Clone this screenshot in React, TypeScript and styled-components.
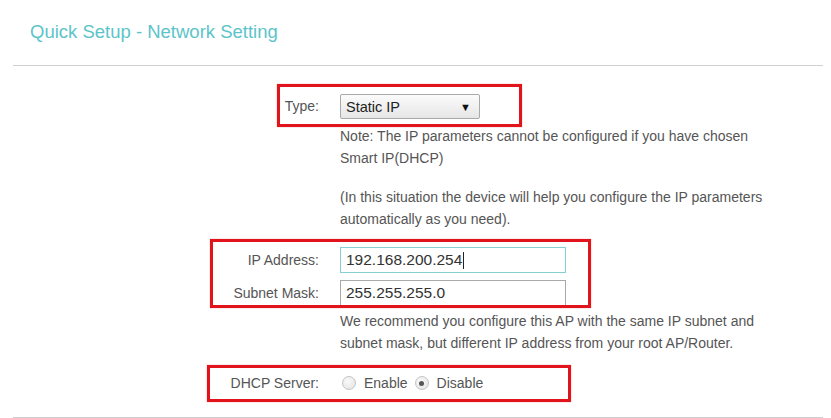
import React from 'react'
import styled, { createGlobalStyle } from 'styled-components'

const GlobalStyle = createGlobalStyle`
  html, body {
    margin: 0;
    padding: 0;
    background: #ffffff;
  }
  body {
    font-family: 'Liberation Sans', Arial, sans-serif;
    color: #555555;
  }
`

const Page = styled.div`
  position: relative;
  width: 831px;
  height: 418px;
  overflow: hidden;
  background: #fff;
`

const Title = styled.h1`
  margin: 0;
  padding: 21px 0 0 30px;
  height: 65px;
  box-sizing: border-box;
  font-size: 18.5px;
  font-weight: 400;
  color: #5cc4c9;
  line-height: 22px;
`

const Rule = styled.div`
  height: 1px;
  margin: 0 8px 0 13px;
  background: #cfcfcf;
`

const Form = styled.div`
  display: grid;
  grid-template-columns: 120px 1fr;
  align-content: start;
  column-gap: 21px;
  padding-left: 199px;
  padding-top: 28px;
  height: 351px;
  box-sizing: border-box;
  font-size: 14px;
`

const Label = styled.div<{ $h?: number; $mt?: number }>`
  text-align: right;
  margin-top: ${(p) => p.$mt ?? 0}px;
  height: ${(p) => p.$h ?? 26}px;
  line-height: ${(p) => p.$h ?? 26}px;
  color: #555;
  white-space: nowrap;
`

const Cell = styled.div<{ $mt?: number }>`
  margin-top: ${(p) => p.$mt ?? 0}px;
`

const Spacer = styled.div``

const Select = styled.div`
  width: 140px;
  height: 25px;
  box-sizing: border-box;
  border: 1px solid #a9a9a9;
  border-radius: 2px;
  background: linear-gradient(#fbfbfb, #e6e6e6);
  display: flex;
  align-items: center;
  justify-content: space-between;
  padding: 0 8px 0 5px;
  font-size: 14.5px;
  color: #222;
`

const Arrow = styled.span`
  font-size: 11px;
  color: #111;
`

const Note = styled.p<{ $mt?: number }>`
  margin: ${(p) => p.$mt ?? 0}px 0 0 0;
  line-height: 21.5px;
  width: 450px;
  color: #555;
`

const Input = styled.div<{ $focus?: boolean }>`
  width: 226px;
  height: 26px;
  box-sizing: border-box;
  border: 1px solid ${(p) => (p.$focus ? '#86d0d4' : '#a9a9a9')};
  background: #fff;
  padding: 0 5px;
  font-size: 15.5px;
  line-height: 24px;
  color: #333;
  display: flex;
  align-items: center;
`

const Caret = styled.span`
  display: inline-block;
  width: 1px;
  height: 17px;
  background: #222;
  margin-left: 1px;
`

const RadioGroup = styled.div`
  display: flex;
  align-items: center;
  height: 22px;
  font-size: 14px;
  color: #555;
`

const Radio = styled.span<{ $checked?: boolean }>`
  width: 12px;
  height: 12px;
  border-radius: 50%;
  border: 1px solid #c4c4c4;
  background: radial-gradient(circle at 40% 35%, #f9f9f9, #e2e2e2);
  margin: 0 8px 0 2px;
  display: inline-flex;
  align-items: center;
  justify-content: center;
  &::after {
    content: '';
    width: 5px;
    height: 5px;
    border-radius: 50%;
    background: ${(p) => (p.$checked ? '#555' : 'transparent')};
  }
`

const RadioText = styled.span`
  margin-right: 5px;
`

const Mark = styled.div<{ $x: number; $y: number; $w: number; $h: number }>`
  position: absolute;
  left: ${(p) => p.$x}px;
  top: ${(p) => p.$y}px;
  width: ${(p) => p.$w}px;
  height: ${(p) => p.$h}px;
  box-sizing: border-box;
  border: 3px solid #e1131b;
  box-shadow: 0 0 1px rgba(225, 19, 27, 0.5);
  pointer-events: none;
`

const BottomRule = styled(Rule)``

export default function App() {
  return (
    <Page>
      <GlobalStyle />
      <Title>Quick Setup - Network Setting</Title>
      <Rule />
      <Form>
        <Label $h={25}>Type:</Label>
        <Cell>
          <Select>
            <span>Static IP</span>
            <Arrow>▼</Arrow>
          </Select>
        </Cell>

        <Spacer />
        <Cell $mt={7}>
          <Note>
            Note: The IP parameters cannot be configured if you have chosen
            <br />
            Smart IP(DHCP)
          </Note>
          <Note $mt={18}>
            (In this situation the device will help you configure the IP parameters
            <br />
            automatically as you need).
          </Note>
        </Cell>

        <Label $mt={17}>IP Address:</Label>
        <Cell $mt={17}>
          <Input $focus>
            192.168.200.254
            <Caret />
          </Input>
        </Cell>

        <Label $mt={7}>Subnet Mask:</Label>
        <Cell $mt={7}>
          <Input>255.255.255.0</Input>
        </Cell>

        <Spacer />
        <Cell $mt={5}>
          <Note>
            We recommend you configure this AP with the same IP subnet and
            <br />
            subnet mask, but different IP address from your root AP/Router.
          </Note>
        </Cell>

        <Label $h={22} $mt={18}>DHCP Server:</Label>
        <Cell $mt={18}>
          <RadioGroup>
            <Radio />
            <RadioText>Enable</RadioText>
            <Radio $checked />
            <RadioText>Disable</RadioText>
          </RadioGroup>
        </Cell>
      </Form>
      <BottomRule />

      <Mark $x={277} $y={84} $w={245} $h={43} />
      <Mark $x={210} $y={239} $w={381} $h={69} />
      <Mark $x={207} $y={365} $w={364} $h={37} />
    </Page>
  )
}
